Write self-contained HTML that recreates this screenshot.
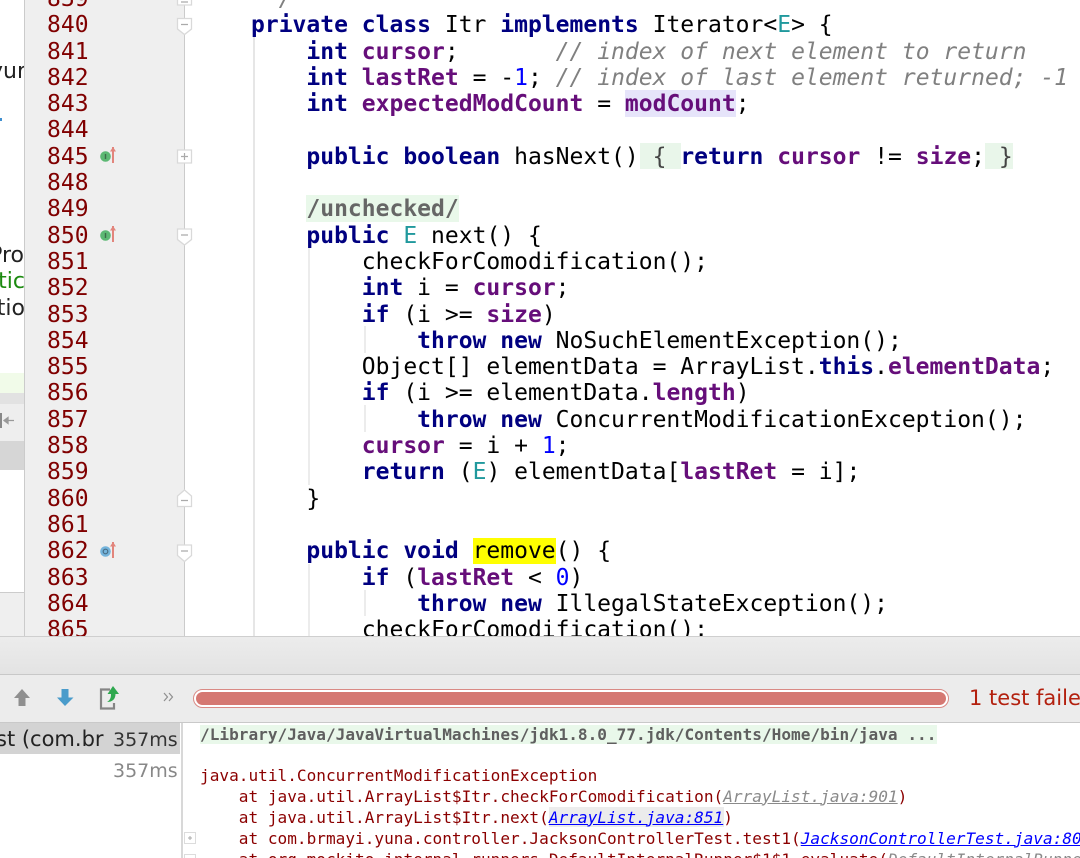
<!DOCTYPE html>
<html><head><meta charset="utf-8"><style>
html,body{margin:0;padding:0;background:#fff}
#p{position:relative;width:1080px;height:858px;overflow:hidden;background:#fff}
.a{position:absolute}
.m{font-family:"DejaVu Sans Mono",monospace}
#code{left:251px;top:-14px;font-size:23px;line-height:26.3px;white-space:pre;color:#000;z-index:2}
#nums{left:47px;top:-14px;font-size:23px;line-height:26.3px;white-space:pre;color:#800000;z-index:2}
b{font-weight:bold;color:#000080}
.f{font-weight:bold;color:#660e7a}
.n{color:#0000ff}
.t{color:#20999d}
.c{color:#808080;font-style:italic}
#con{left:200px;top:764.5px;font-size:16.1px;line-height:21px;white-space:pre;color:#8b0000;z-index:2}
.g{color:#8a8a8a;font-style:italic;text-decoration:underline}
.l{color:#0000ff;font-style:italic;text-decoration:underline}
.s{font-family:"DejaVu Sans",sans-serif}
</style></head><body><div id="p">

<!-- left panel -->
<div class="a" style="left:0;top:0;width:24px;height:373px;background:#fff;overflow:hidden">
<div class="a s" style="right:-2px;top:60px;font-size:22px;line-height:24px;color:#222">yur</div>
<div class="a" style="left:0;top:118px;width:2px;height:3px;background:#3f8fd0"></div>
<div class="a s" style="right:0;top:244px;font-size:22px;line-height:24px;color:#222">Pro</div>
<div class="a s" style="right:-1px;top:270px;font-size:22px;line-height:24px;color:#1c8a10">tic</div>
<div class="a s" style="right:-1px;top:297px;font-size:22px;line-height:24px;color:#222">tio</div>
</div>
<div class="a" style="left:0;top:373px;width:24px;height:20px;background:#f1fbe9"></div>
<div class="a" style="left:0;top:393px;width:24px;height:11px;background:#e2e2e2"></div>
<div class="a" style="left:0;top:404px;width:24px;height:37px;background:#eeeeee"></div>
<div class="a" style="left:0;top:441px;width:24px;height:29px;background:#d6d6d6"></div>
<svg class="a" style="left:0;top:410px" width="24" height="22"><rect x="0" y="3" width="2" height="15" fill="#888"/><path d="M4 10.5h10M4 10.5l4-3v6z" stroke="#999" stroke-width="1.3" fill="#999"/></svg>
<div class="a" style="left:0;top:592px;width:24px;height:44px;background:#efefef;border-top:1px solid #ccc;box-sizing:border-box"></div>

<!-- gutter -->
<div class="a" style="left:24px;top:0;width:161px;height:637px;background:#efefef;border-left:1px solid #cbcbcb;border-right:1px solid #cbcbcb;box-sizing:border-box"></div>

<!-- indent guides -->
<div class="a" style="left:253px;top:36px;width:1.5px;height:601px;background:#e6e6e6"></div>
<div class="a" style="left:308px;top:247px;width:1.5px;height:238px;background:#ececec"></div>
<div class="a" style="left:308px;top:564px;width:1.5px;height:73px;background:#ececec"></div>
<div class="a" style="left:364px;top:326px;width:1.5px;height:27px;background:#ececec"></div>
<div class="a" style="left:364px;top:405px;width:1.5px;height:27px;background:#ececec"></div>
<div class="a" style="left:364px;top:590px;width:1.5px;height:26px;background:#ececec"></div>

<!-- highlights -->
<div class="a" style="left:625px;top:90px;width:111px;height:27px;background:#e6e4fa"></div>
<div class="a" style="left:640px;top:143px;width:41px;height:26px;background:#e9f6ea"></div>
<div class="a" style="left:985px;top:143px;width:28px;height:26px;background:#e9f6ea"></div>
<div class="a" style="left:306px;top:195px;width:153px;height:27px;background:#e9f8ea"></div>
<div class="a" style="left:473px;top:538px;width:83px;height:26px;background:#ffff00"></div>

<div id="nums" class="a m">839
840
841
842
843
844
845
848
849
850
851
852
853
854
855
856
857
858
859
860
861
862
863
864
865</div>

<div id="code" class="a m"> <span style="color:#808080;font-style:italic">*/</span>
<b>private class</b> Itr <b>implements</b> Iterator&lt;<span class="t">E</span>&gt; {
    <b>int</b> <span class="f">cursor</span>;       <span class="c">// index of next element to return</span>
    <b>int</b> <span class="f">lastRet</span> = -<span class="n">1</span>; <span class="c">// index of last element returned; -1</span>
    <b>int</b> <span class="f">expectedModCount</span> = <span class="f">modCount</span>;

    <b>public boolean</b> hasNext() <span style="color:#444">{</span> <b>return</b> <span class="f">cursor</span> != <span class="f">size</span>; <span style="color:#444">}</span>

    <span style="font-weight:bold;color:#666">/unchecked/</span>
    <b>public</b> <span class="t">E</span> next() {
        checkForComodification();
        <b>int</b> i = <span class="f">cursor</span>;
        <b>if</b> (i &gt;= <span class="f">size</span>)
            <b>throw new</b> NoSuchElementException();
        Object[] elementData = ArrayList.<b>this</b>.<span class="f">elementData</span>;
        <b>if</b> (i &gt;= elementData.<span class="f">length</span>)
            <b>throw new</b> ConcurrentModificationException();
        <span class="f">cursor</span> = i + <span class="n">1</span>;
        <b>return</b> (<span class="t">E</span>) elementData[<span class="f">lastRet</span> = i];
    }

    <b>public void</b> remove() {
        <b>if</b> (<span class="f">lastRet</span> &lt; <span class="n">0</span>)
            <b>throw new</b> IllegalStateException();
        checkForComodification();</div>

<!-- gutter icons -->
<svg class="a" style="left:95px;top:0;z-index:3" width="100" height="637">
<defs>
<g id="arr"><path d="M18 -9V7" stroke="#e2857c" stroke-width="2"/><path d="M15 -4.500L18 -9L21 -4.500z" fill="#e2857c"/></g>
</defs>
<g transform="translate(0,156)"><circle cx="10.500" cy="0.500" r="5.300" fill="#5cb873"/><rect x="9.800" y="-2" width="1.400" height="5" fill="#3d6b4a"/><use href="#arr"/></g>
<g transform="translate(0,235)"><circle cx="10.500" cy="0.500" r="5.300" fill="#5cb873"/><rect x="9.800" y="-2" width="1.400" height="5" fill="#3d6b4a"/><use href="#arr"/></g>
<g transform="translate(0,551)"><circle cx="10.500" cy="0.500" r="5.300" fill="#74b4dc"/><circle cx="10.500" cy="0.500" r="2.300" fill="none" stroke="#4a6d85" stroke-width="1.200"/><use href="#arr"/></g>
<!-- folds -->
<g fill="#fff" stroke="#d9d9d9" stroke-width="1.300">
<path d="M82.500 -5H96.500V5H82.500z"/>
<path d="M82.500 18.500H96.500V29L89.500 34.500L82.500 29z"/>
<path d="M82.500 150H96.500V163H82.500z"/>
<path d="M82.500 229H96.500V239.500L89.500 245L82.500 239.500z"/>
<path d="M82.500 506.500H96.500V496L89.500 490L82.500 496z"/>
<path d="M82.500 545H96.500V555.500L89.500 561.500L82.500 555.500z"/>
</g>
<g stroke="#aaa" stroke-width="1.200">
<path d="M86 2H93M86 24.500H93M86 156.500H93M89.500 153V160M86 235H93M86 500.500H93M86 551H93" fill="none"/>
</g>
</svg>

<!-- bottom bars -->
<div class="a" style="left:0;top:636px;width:1080px;height:39px;background:linear-gradient(#ececec,#e3e3e3);border-top:1.500px solid #cfcfcf;border-bottom:1px solid #c8c8c8;box-sizing:border-box;z-index:4"></div>
<div class="a" style="left:0;top:675px;width:1080px;height:48px;background:#ececec;border-bottom:1.500px solid #c9c9c9;box-sizing:border-box;z-index:4"></div>

<svg class="a" style="left:0;top:675px;z-index:5" width="190" height="48">
<path d="M22 14L30 23H25.500V31H18.500V23H14z" fill="#8f8f8f"/>
<path d="M61.500 14H68.500V22.500H73.500L65 31L57 22.500H61.500z" fill="#4a9ccb"/>
<path d="M110 14.500H101V33.500H114V28" fill="none" stroke="#858585" stroke-width="2.200"/>
<path d="M113 11L119 19H115.500C115.500 24 112.500 27 107 27C110.500 25 111 22 111 19H107.500z" fill="#2fa84f"/>
<path d="M164 18L167.500 22L164 26M169 18L172.500 22L169 26" fill="none" stroke="#8f8f8f" stroke-width="1.200"/>
</svg>

<div class="a" style="left:193px;top:689px;width:756px;height:19px;border:1px solid #d98a85;border-radius:9.500px;box-sizing:border-box;background:#fff;z-index:5"></div>
<div class="a" style="left:196px;top:692px;width:750px;height:13px;background:#d57872;border-radius:6.500px;z-index:6"></div>
<div class="a s" style="left:969px;top:685px;font-size:21px;line-height:27px;color:#b3200e;white-space:pre;z-index:6">1 test failed</div>

<!-- tree -->
<div class="a" style="left:0;top:723px;width:180px;height:31px;background:#d3d3d3;z-index:1"></div>
<div class="a s" style="left:-4px;top:725px;font-size:21px;line-height:28px;color:#222;white-space:pre;z-index:2">st (com.br</div>
<div class="a s" style="left:113px;top:727px;font-size:19px;line-height:26px;color:#333;white-space:pre;z-index:2">357ms</div>
<div class="a s" style="left:113px;top:758px;font-size:19px;line-height:26px;color:#888;white-space:pre;z-index:2">357ms</div>
<div class="a" style="left:181px;top:723px;width:1.500px;height:135px;background:#d8d8d8"></div>

<!-- console -->
<div class="a" style="left:200px;top:725px;width:737px;height:19px;background:#e9f8ea"></div>
<div class="a m" style="left:200px;top:724px;font-size:16.1px;line-height:21px;font-weight:bold;color:#5f5f5f;white-space:pre;z-index:2">/Library/Java/JavaVirtualMachines/jdk1.8.0_77.jdk/Contents/Home/bin/java ...</div>
<div class="a" style="left:549px;top:807px;width:175px;height:20px;background:#ececec"></div>
<div id="con" class="a m">java.util.ConcurrentModificationException
    at java.util.ArrayList$Itr.checkForComodification(<span class="g">ArrayList.java:901</span>)
    at java.util.ArrayList$Itr.next(<span class="l">ArrayList.java:851</span>)
    at com.brmayi.yuna.controller.JacksonControllerTest.test1(<span class="l">JacksonControllerTest.java:80</span>)
    at org.mockito.internal.runners.DefaultInternalRunner$1$1.evaluate(<span class="g">DefaultInternalRunner.java:44</span>)</div>
<svg class="a" style="left:183px;top:830px;z-index:3" width="16" height="28"><g fill="#fff" stroke="#dcdcdc"><rect x="1.500" y="2.500" width="11" height="11"/><rect x="1.500" y="24.500" width="11" height="11"/></g><path d="M5 8H9M7 6V10" stroke="#aaa"/></svg>

</div></body></html>
